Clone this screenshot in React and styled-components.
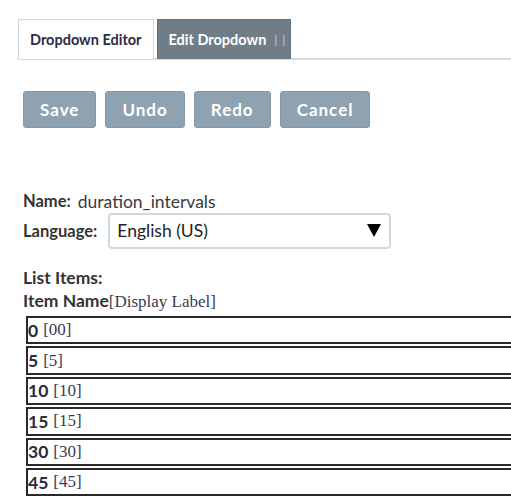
import React from "react";
import styled, { createGlobalStyle } from "styled-components";

const Global = createGlobalStyle`
  html, body { margin: 0; padding: 0; background: #fff; overflow: hidden; }
  body { font-family: Lato, "Open Sans", sans-serif; color: #333; }
`;

const Page = styled.div`
  padding: 19px 0 0 18px;
  width: 511px;
  box-sizing: border-box;
`;

const TabBar = styled.div`
  display: flex;
  align-items: flex-end;
  gap: 3px;
  border-bottom: 2px solid #d3dae0;
  height: 41px;
  box-sizing: border-box;
`;

const Tab = styled.div`
  height: 40px;
  box-sizing: border-box;
  display: flex;
  align-items: center;
  padding: 0 ${(p) => (p.$active ? 11 : 0)}px 0 11px;
  font-size: 14.5px;
  font-weight: 700;
  border: 1px solid ${(p) => (p.$active ? "#cfd6dc" : "#64727e")};
  border-bottom: none;
  background: ${(p) => (p.$active ? "#fff" : "#6f7d89")};
  color: ${(p) => (p.$active ? "#2b2c45" : "#fff")};
  margin-bottom: -1px;
`;

const Sep = styled.span`
  font-weight: 400;
  color: #c9d0d6;
  margin-left: 8px;
  letter-spacing: 5px;
  font-size: 12px;
`;

const Toolbar = styled.div`
  display: flex;
  gap: 9px;
  margin: 31px 0 0 5px;
`;

const Button = styled.button`
  height: 37px;
  padding: 0 16px;
  border: 1px solid #8498a8;
  border-radius: 3px;
  background: #8fa2b2;
  color: #fff;
  font-family: Lato, sans-serif;
  font-weight: 700;
  font-size: 17px;
  letter-spacing: 1px;
`;

const Details = styled.div`
  margin: 62px 0 0 5px;
  font-size: 17.5px;
`;

const Line = styled.div`
  display: flex;
  align-items: center;
  gap: ${(p) => p.$gap || 6}px;
  height: ${(p) => p.$h || 22}px;
`;

const Label = styled.span`
  font-weight: 700;
  color: #333;
  font-size: 16.5px;
`;

const Value = styled.span`
  color: #3a3a3a;
`;

const Select = styled.div`
  width: 283px;
  height: 36px;
  box-sizing: border-box;
  border: 2px solid #d2d8de;
  border-radius: 4px;
  display: flex;
  align-items: center;
  justify-content: space-between;
  padding: 0 8px 0 7px;
  font-size: 17.5px;
  color: #222;
`;

const Heading = styled.div`
  font-weight: 700;
  font-size: 17.5px;
  color: #333;
  margin-top: ${(p) => p.$mt || 0}px;
  line-height: 23px;
`;

const SerifLabel = styled.span`
  font-family: "Liberation Serif", "Times New Roman", serif;
  font-weight: 400;
  color: #3a3a55;
  font-size: 17px;
`;

const List = styled.div`
  margin: 3px 0 0 8px;
  width: 520px;
  display: flex;
  flex-direction: column;
  gap: 2px;
`;

const Row = styled.div`
  height: 28.4px;
  box-sizing: border-box;
  border: 2px solid #2a2a2a;
  display: flex;
  align-items: center;
  gap: 5px;
`;

const ItemName = styled.span`
  font-weight: 700;
  font-size: 17.5px;
  color: #2b2c3a;
`;

const items = [
  ["0", "00"],
  ["5", "5"],
  ["10", "10"],
  ["15", "15"],
  ["30", "30"],
  ["45", "45"],
];

export default function App() {
  return (
    <>
      <Global />
      <Page>
        <TabBar>
          <Tab $active>Dropdown Editor</Tab>
          <Tab>
            Edit Dropdown<Sep>||</Sep>
          </Tab>
        </TabBar>
        <Toolbar>
          <Button>Save</Button>
          <Button>Undo</Button>
          <Button>Redo</Button>
          <Button>Cancel</Button>
        </Toolbar>
        <Details>
          <Line $gap={7}>
            <Label>Name:</Label>
            <Value>duration_intervals</Value>
          </Line>
          <Line $h={37} $gap={11}>
            <Label>Language:</Label>
            <Select>
              <span>English (US)</span>
              <svg width="14" height="13" viewBox="0 0 14 13">
                <polygon points="0,0 14,0 7,13" fill="#000" />
              </svg>
            </Select>
          </Line>
          <Heading $mt={17}>List Items:</Heading>
          <Heading>
            Item Name<SerifLabel>[Display Label]</SerifLabel>
          </Heading>
        </Details>
        <List>
          {items.map(([n, l]) => (
            <Row key={n}>
              <ItemName>{n}</ItemName>
              <SerifLabel>[{l}]</SerifLabel>
            </Row>
          ))}
        </List>
      </Page>
    </>
  );
}
